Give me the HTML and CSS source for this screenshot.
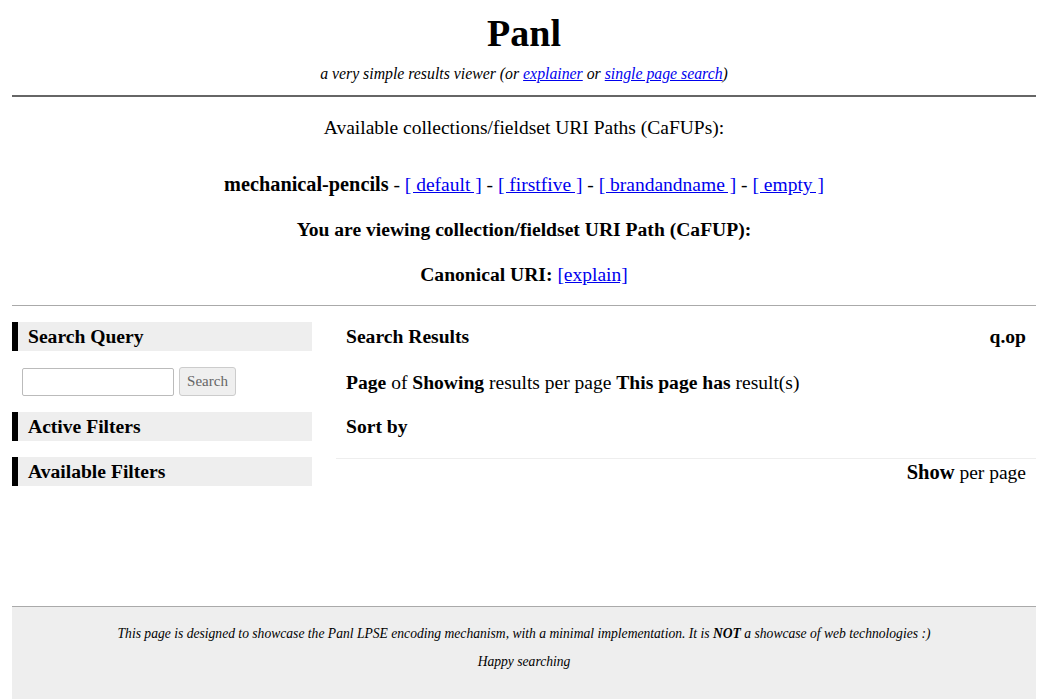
FILE: index.html
```html
<!DOCTYPE html>
<html>
<head>
<meta charset="utf-8">
<link rel="stylesheet" href="styles.css">
</head>
<body>
<header class="top">
  <h1 class="title">Panl</h1>
  <p class="subtitle">a very simple results viewer (or <a href="#">explainer</a> or <a href="#">single page search</a>)</p>
</header>
<section class="collections">
  <p class="avail">Available collections/fieldset URI Paths (CaFUPs):</p>
  <p class="coll-line"><b>mechanical-pencils</b> - <a href="#">[ default ]</a> - <a href="#">[ firstfive ]</a> - <a href="#">[ brandandname ]</a> - <a href="#">[ empty ]</a></p>
  <p class="viewing"><b>You are viewing collection/fieldset URI Path (CaFUP):</b></p>
  <p class="canon"><b>Canonical URI:</b> <a href="#">[explain]</a></p>
</section>
<main class="content">
  <aside class="sidebar">
    <h2 class="side-head">Search Query</h2>
    <form class="search-form">
      <input class="search-input" type="text">
      <button class="search-btn" type="button">Search</button>
    </form>
    <h2 class="side-head">Active Filters</h2>
    <h2 class="side-head">Available Filters</h2>
  </aside>
  <section class="results">
    <div class="res-row res-head"><b>Search Results</b><b>q.op</b></div>
    <div class="res-row"><span><b>Page</b> of <b>Showing</b> results per page <b>This page has</b> result(s)</span></div>
    <div class="res-row sort"><b>Sort by</b></div>
    <div class="res-row per-page"><span><b>Show</b> per page</span></div>
  </section>
</main>
<footer class="foot">
  <p>This page is designed to showcase the Panl LPSE encoding mechanism, with a minimal implementation. It is <b>NOT</b> a showcase of web technologies :)</p>
  <p>Happy searching</p>
</footer>
</body>
</html>
```
FILE: styles.css
```css
html, body {
  background: #fff;
}
body {
  margin: 0 10px 0 12px;
  font-family: "Liberation Serif", "Times New Roman", serif;
  color: #000;
  font-size: 19.5px;
}
a { color: #0000ee; }
p { margin: 0; }
.top {
  text-align: center;
  border-bottom: 2px solid #666;
  padding: 11px 0 10px;
}
.title {
  margin: 0;
  font-size: 38px;
  line-height: 44px;
  font-weight: bold;
}
.subtitle {
  margin-top: 8px;
  font-style: italic;
  font-size: 15.8px;
  line-height: 22px;
}
.collections {
  text-align: center;
  border-bottom: 1px solid #aaa;
  padding: 19px 0 18px;
}
.collections p {
  line-height: 24px;
}
.avail { margin-bottom: 32px; }
.coll-line { margin-bottom: 21px; }
.viewing { margin-bottom: 21px; }
.collections b { font-size: 19.6px; }
.collections .coll-line b { font-size: 20.3px; }
.content {
  display: flex;
  padding-top: 16px;
  min-height: 284px;
}
.sidebar {
  width: 300px;
  flex: none;
}
.side-head {
  margin: 0;
  background: #eee;
  border-left: 6px solid #000;
  padding-left: 10px;
  font-size: 19.6px;
  line-height: 29px;
  height: 29px;
}
.search-form {
  display: flex;
  gap: 5px;
  padding: 16px 0 16px 10px;
  align-items: center;
}
.search-input {
  width: 152px;
  height: 28px;
  box-sizing: border-box;
  border: 1px solid #bbb;
  border-radius: 2px;
  margin: 0;
}
.search-btn {
  height: 29px;
  width: 57px;
  box-sizing: border-box;
  background: #efefef;
  border: 1px solid #ccc;
  border-radius: 3px;
  color: #666;
  font-family: "Liberation Serif", serif;
  font-size: 15px;
  padding: 0;
}
.sidebar .side-head + .side-head { margin-top: 16px; }
.results {
  flex: 1;
  margin-left: 24px;
}
.res-row {
  display: flex;
  justify-content: space-between;
  padding: 0 10px;
  line-height: 29px;
  margin-bottom: 17px;
}
.res-row.sort { margin-top: -2px; margin-bottom: 17px; }
.res-row b { font-size: 19.6px; }
.per-page {
  justify-content: flex-end;
  border-top: 1px solid #eee;
  line-height: 26px;
  margin-top: 0;
}
.per-page b { font-size: 20.5px; }
.foot {
  border-top: 1px solid #aaa;
  background: #eee;
  text-align: center;
  font-style: italic;
  font-size: 13.6px;
  padding: 13px 0 29px;
}
.foot p { line-height: 28px; }
```
